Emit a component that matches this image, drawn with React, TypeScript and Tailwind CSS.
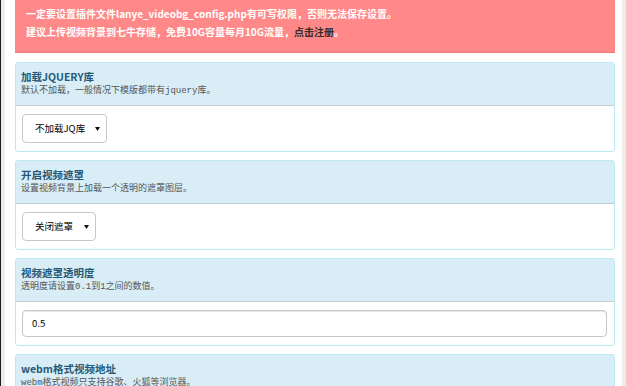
const cjk = { fontFamily: '"Noto Sans CJK SC", "Noto Sans", sans-serif' };
const descFont = { fontFamily: '"Liberation Mono", "Noto Sans CJK SC", monospace' };

function Caret() {
  return (
    <svg width="5" height="4" viewBox="0 0 5 4" className="shrink-0">
      <path d="M0 0h5L2.5 4z" fill="#111" />
    </svg>
  );
}

function FakeSelect({ label, width }: { label: string; width: string }) {
  return (
    <div
      className={`${width} h-[29px] flex items-center justify-between pl-[12px] pr-[6px] border border-[#c8c8c8] rounded-[4px] bg-white text-[9.5px] text-black`}
    >
      <span>{label}</span>
      <Caret />
    </div>
  );
}

function Panel({
  title,
  desc,
  children,
}: {
  title: string;
  desc: string;
  children?: React.ReactNode;
}) {
  return (
    <div className="mb-[8px] border border-[#bce8f1] rounded-[3px] bg-white">
      <div className="bg-[#d9edf7] border-b border-[#c6cdd2] pl-[5px] pt-[6px] pb-[6px] leading-[15px]">
        <div className="text-[10.5px] font-bold text-[#245a78]" style={cjk}>
          {title}
        </div>
        <div className="text-[9px] text-[#555]" style={descFont}>
          {desc}
        </div>
      </div>
      {children && <div className="pl-[6px] pr-[7px] pt-[8px] pb-[8px]">{children}</div>}
    </div>
  );
}

export default function App() {
  return (
    <div className="w-[626px] h-[386px] overflow-hidden flex bg-white" style={cjk}>
      <div className="w-px bg-[#1a1a1a]" />
      <div className="w-[4px] bg-[#ececec]" />
      <div className="flex-1 pl-[10px] pr-[7px]">
        <div className="mb-[9px] bg-[#ff8888] border-b border-[#f07b7b] pl-[11px] pt-[5px] pb-[11px] text-[10px] leading-[18px] text-white font-bold">
          <div>一定要设置插件文件lanye_videobg_config.php有可写权限，否则无法保存设置。</div>
          <div>
            建议上传视频背景到七牛存储，免费10G容量每月10G流量，
            <span className="text-[#3a2a2a]">点击注册</span>。
          </div>
        </div>

        <Panel title="加载JQUERY库" desc="默认不加载，一般情况下模版都带有jquery库。">
          <FakeSelect label="不加载JQ库" width="w-[85px]" />
        </Panel>

        <Panel title="开启视频遮罩" desc="设置视频背景上加载一个透明的遮罩图层。">
          <FakeSelect label="关闭遮罩" width="w-[74px]" />
        </Panel>

        <Panel title="视频遮罩透明度" desc="透明度请设置0.1到1之间的数值。">
          <div className="h-[27px] flex items-center pl-[9px] border border-[#c8c8c8] rounded-[4px] bg-white shadow-[inset_0_1px_1px_rgba(0,0,0,0.1)] text-[9.5px] text-black">
            0.5
          </div>
        </Panel>

        <Panel title="webm格式视频地址" desc="webm格式视频只支持谷歌、火狐等浏览器。">
          <div className="h-[27px] border border-[#c8c8c8] rounded-[4px]" />
        </Panel>
      </div>
      <div className="w-[4px] bg-[#ececec]" />
    </div>
  );
}
